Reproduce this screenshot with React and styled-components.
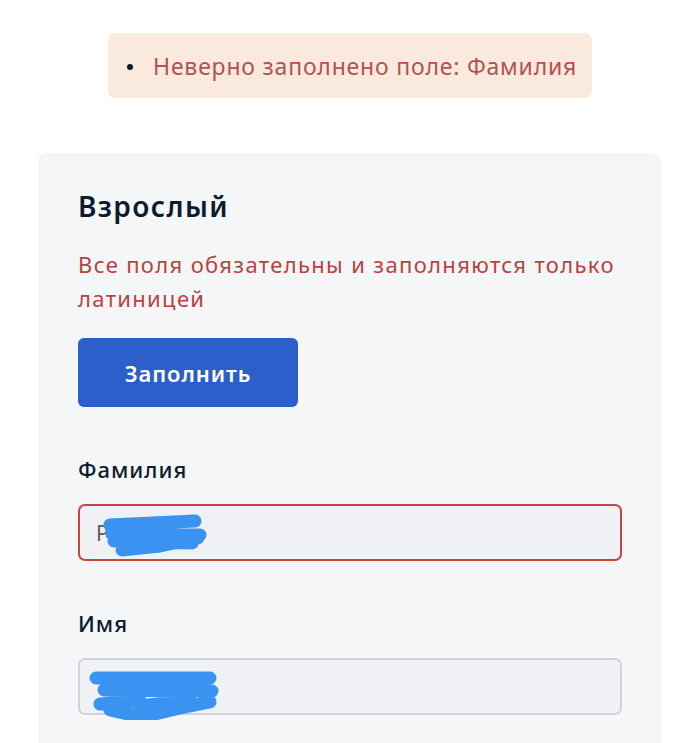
import React from 'react';
import styled, { createGlobalStyle } from 'styled-components';

const GlobalStyle = createGlobalStyle`
  body {
    margin: 0;
    background: #ffffff;
    font-family: "Noto Sans", "Open Sans", sans-serif;
  }
`;

const Page = styled.div`
  display: flex;
  flex-direction: column;
  align-items: center;
  padding-top: 33px;
`;

const Alert = styled.ul`
  margin: 0;
  width: 484px;
  height: 65px;
  box-sizing: border-box;
  padding: 0 0 0 45px;
  display: flex;
  align-items: center;
  background: #f9eadd;
  border-radius: 7px;
  list-style: none;
`;

const AlertItem = styled.li`
  position: relative;
  font-size: 23px;
  letter-spacing: 0.8px;
  color: #b3524f;

  &::before {
    content: '';
    position: absolute;
    left: -26px;
    top: 50%;
    width: 6px;
    height: 6px;
    margin-top: -2px;
    border-radius: 50%;
    background: #0e1a2b;
  }
`;

const Card = styled.section`
  align-self: stretch;
  margin: 55px 39px 0 38px;
  padding: 36px 40px 30px;
  background: #f5f6f8;
  border-radius: 8px;
  min-height: 600px;
`;

const Title = styled.h2`
  margin: 0;
  font-size: 28px;
  line-height: 34px;
  letter-spacing: 1.4px;
  font-weight: 600;
  color: #0d1b2e;
`;

const Hint = styled.p`
  margin: 24px 0 0;
  font-size: 22px;
  line-height: 34px;
  letter-spacing: 1.35px;
  color: #b7433f;
  max-width: 560px;
`;

const FillButton = styled.button`
  margin-top: 23px;
  width: 220px;
  height: 69px;
  border: none;
  border-radius: 6px;
  background: #2d5fca;
  color: #ffffff;
  font-family: inherit;
  font-size: 22px;
  letter-spacing: 0.9px;
  font-weight: 600;
`;

const Field = styled.div`
  margin-top: ${p => p.$first ? '48px' : '48px'};
`;

const Label = styled.div`
  font-size: 22px;
  line-height: 28px;
  letter-spacing: 1px;
  font-weight: 500;
  color: #0d1b2e;
`;

const InputBox = styled.div`
  position: relative;
  margin-top: 21px;
  width: 544px;
  height: 57px;
  box-sizing: border-box;
  border: 2px solid ${p => p.$error ? '#c9463e' : '#d0d4da'};
  border-radius: 7px;
  background: #eff1f5;
  padding-left: 16px;
  display: flex;
  align-items: center;
  font-size: 21px;
  color: #555a61;
`;

const Scribble = styled.svg`
  position: absolute;
  left: 0;
  top: 0;
  pointer-events: none;
`;

const ink = {
  fill: 'none',
  stroke: '#3a93f0',
  strokeWidth: 13,
  strokeLinecap: 'round',
  strokeLinejoin: 'round',
};

export default function App() {
  return (
    <>
      <GlobalStyle />
      <Page>
        <Alert>
          <AlertItem>Неверно заполнено поле: Фамилия</AlertItem>
        </Alert>
        <Card>
          <Title>Взрослый</Title>
          <Hint>Все поля обязательны и заполняются только латиницей</Hint>
          <FillButton type="button">Заполнить</FillButton>

          <Field $first>
            <Label>Фамилия</Label>
            <InputBox $error>
              Р
              <Scribble width="140" height="57">
                <path {...ink} d="M30 19 L115 15 M32 28 L120 29 M34 35 L112 37 M42 44 L80 40 L118 32" />
              </Scribble>
            </InputBox>
          </Field>

          <Field>
            <Label>Имя</Label>
            <InputBox>
              <Scribble width="150" height="60">
                <path {...ink} d="M16 18 L130 18 M24 30 L132 31 M20 44 L60 41 M30 50 L62 57 L100 48 L130 42 M60 46 L110 40" />
              </Scribble>
            </InputBox>
          </Field>
        </Card>
      </Page>
    </>
  );
}
